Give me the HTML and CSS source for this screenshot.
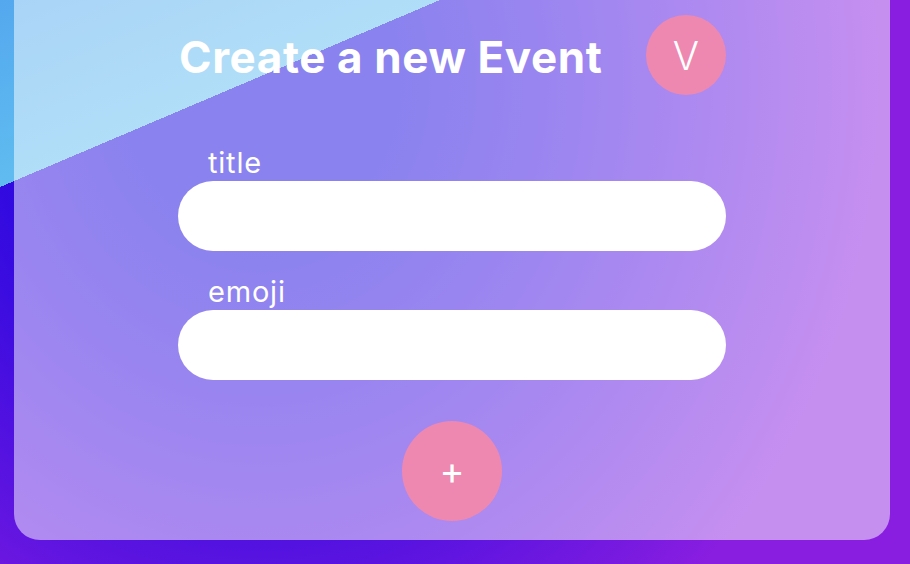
FILE: index.html
```html
<!DOCTYPE html>
<html lang="en">
<head>
<meta charset="utf-8">
<title>Create a new Event</title>
<link rel="stylesheet" href="styles.css">
</head>
<body>
<div class="page">
  <main class="card">
    <header class="header">
      <h1 class="heading">Create a new Event</h1>
      <div class="avatar">V</div>
    </header>
    <form class="form">
      <label class="field">
        <span class="label">title</span>
        <input class="input" type="text">
      </label>
      <label class="field">
        <span class="label">emoji</span>
        <input class="input" type="text">
      </label>
      <button class="add" type="button">+</button>
    </form>
  </main>
</div>
</body>
</html>
```
FILE: styles.css
```css
html, body {
  margin: 0;
  padding: 0;
}

body {
  width: 910px;
  height: 564px;
  overflow: hidden;
  font-family: Inter, "Noto Sans", "Liberation Sans", sans-serif;
  background:
    linear-gradient(to bottom right, #54a8ee 0%, #60bcf0 50%, transparent 50%) 0 0 / 440px 187px no-repeat,
    radial-gradient(ellipse 620px 700px at 260px 80px, #1405df 0%, #1405df 22%, #3a0ce0 50%, #5c14e0 72%, #8a1ee0 100%);
}

.page {
  height: 564px;
  box-sizing: border-box;
  padding: 0 20px 24px 14px;
}

.card {
  width: 876px;
  height: 540px;
  box-sizing: border-box;
  padding-top: 15px;
  background: rgba(255, 255, 255, 0.5);
  border-radius: 0 0 26px 26px;
  display: flex;
  flex-direction: column;
  align-items: center;
}

.header {
  width: 548px;
  height: 80px;
  display: flex;
  align-items: center;
  justify-content: space-between;
}

.heading {
  margin: 0;
  padding: 4px 0 0 1px;
  font-size: 44px;
  line-height: 1;
  font-weight: 700;
  letter-spacing: 0.6px;
  color: #fff;
}

.avatar {
  width: 80px;
  height: 80px;
  border-radius: 50%;
  background: #ee88b0;
  color: #fff;
  font-size: 39px;
  font-weight: 300;
  line-height: 1;
  display: flex;
  align-items: center;
  justify-content: center;
}

.form {
  width: 548px;
  margin: 51px 0 0;
  display: flex;
  flex-direction: column;
}

.field {
  display: flex;
  flex-direction: column;
}

.field + .field {
  margin-top: 24px;
}

.label {
  padding-left: 30px;
  margin-bottom: 1px;
  font-size: 29px;
  line-height: 34px;
  letter-spacing: 0.8px;
  color: #fff;
}

.input {
  height: 70px;
  box-sizing: border-box;
  border: 0;
  border-radius: 35px;
  background: #fff;
  padding: 0 30px;
  font: inherit;
  font-size: 24px;
  outline: none;
}

.add {
  align-self: center;
  margin-top: 41px;
  width: 100px;
  height: 100px;
  padding: 0 0 2px;
  border: 0;
  border-radius: 50%;
  background: #ee88b0;
  color: #fff;
  font-family: Inter, "Noto Sans", "Liberation Sans", sans-serif;
  font-size: 38px;
  font-weight: 400;
  line-height: 1;
  display: flex;
  align-items: center;
  justify-content: center;
}
```
